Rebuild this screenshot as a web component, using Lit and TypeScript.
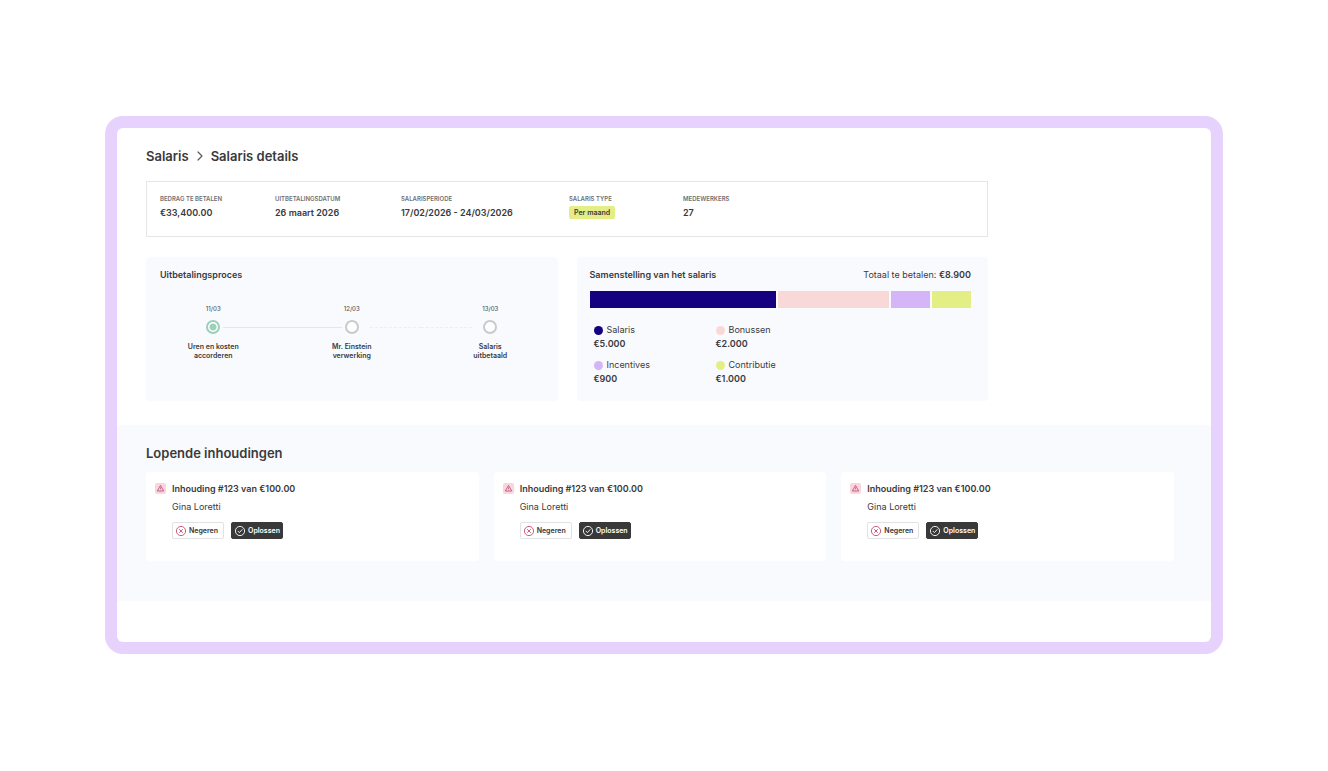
import { LitElement, html, css, svg } from "lit";
import { customElement, property } from "lit/decorators.js";
import { classMap } from "lit/directives/class-map.js";

interface Part {
  key: string;
  label: string;
  amount: string;
  weight: number;
}

const parts: Part[] = [
  { key: "navy", label: "Salaris", amount: "€5.000", weight: 186 },
  { key: "pink", label: "Bonussen", amount: "€2.000", weight: 110 },
  { key: "lilac", label: "Incentives", amount: "€900", weight: 39 },
  { key: "lime", label: "Contributie", amount: "€1.000", weight: 39 },
];

const steps = [
  { date: "11/03", first: "Uren en kosten", second: "accorderen", before: "none", after: "solid", active: true },
  { date: "12/03", first: "Mr. Einstein", second: "verwerking", before: "solid", after: "dashed", active: false },
  { date: "13/03", first: "Salaris", second: "uitbetaald", before: "dashed", after: "none", active: false },
];

const circle = svg`<circle cx="6" cy="6" r="4.6" fill="none" stroke="currentColor" stroke-width="0.9" />`;

@customElement("deduction-card")
class DeductionCard extends LitElement {
  @property() heading = "";
  @property() person = "";

  static styles = css`
    :host {
      display: block;
      background: #fff;
      box-sizing: border-box;
      padding: 10px 9px 22px;
      border-radius: 4px;
    }
    .card {
      display: grid;
      grid-template-columns: 11px 1fr;
      column-gap: 6px;
    }
    .alert {
      width: 11px;
      height: 11px;
      margin-top: 1px;
      border-radius: 2px;
      background: #f9d5de;
      color: #bf4470;
      display: block;
    }
    h3 {
      margin: 0;
      font-size: 9px;
      line-height: 13px;
      font-weight: 600;
    }
    p {
      margin: 5px 0 9px;
      font-size: 9px;
      line-height: 13px;
    }
    .actions {
      display: flex;
      gap: 7px;
    }
    button {
      display: flex;
      align-items: center;
      gap: 2px;
      box-sizing: border-box;
      height: 17px;
      padding: 0 5px 0 2px;
      border: 1px solid #e2e2e4;
      border-radius: 2px;
      background: #fff;
      color: #333335;
      font: 600 7px/9px Inter, sans-serif;
      cursor: pointer;
    }
    .solve {
      background: #39393a;
      border-color: #39393a;
      color: #fff;
      padding-right: 2px;
    }
    button svg {
      width: 12px;
      height: 12px;
    }
    .cross {
      color: #c84a72;
    }
  `;

  render() {
    return html`
      <article class="card">
        <svg class="alert" viewBox="0 0 11 11" aria-hidden="true">
          <path d="M5.5 2.4 8.7 8H2.3Z" fill="none" stroke="currentColor" stroke-width="0.8" stroke-linejoin="round" />
          <path d="M5.5 4.3V6.1M5.5 6.8V7.3" stroke="currentColor" stroke-width="0.7" />
        </svg>
        <div>
          <h3>${this.heading}</h3>
          <p>${this.person}</p>
          <div class="actions">
            <button type="button">
              <svg class="cross" viewBox="0 0 12 12" aria-hidden="true">
                ${circle}
                <path d="M4.5 4.5 7.5 7.5M7.5 4.5 4.5 7.5" stroke="currentColor" stroke-width="0.9" stroke-linecap="round" />
              </svg>
              Negeren
            </button>
            <button type="button" class="solve">
              <svg viewBox="0 0 12 12" aria-hidden="true">
                ${circle}
                <path d="M4 6.2 5.4 7.6 8.1 4.6" fill="none" stroke="currentColor" stroke-width="0.9" stroke-linecap="round" stroke-linejoin="round" />
              </svg>
              Oplossen
            </button>
          </div>
        </div>
      </article>
    `;
  }
}

@customElement("app-root")
class AppRoot extends LitElement {
  static styles = css`
    :host {
      display: block;
      box-sizing: border-box;
      min-height: 100vh;
      padding: 116px 105px;
      background: #fff;
      color: #3a3a3c;
      font-family: Inter, sans-serif;
    }
    .frame {
      border: 12px solid #e6d2fc;
      border-radius: 18px;
      background: #e6d2fc;
    }
    .screen {
      background: #fff;
      border-radius: 6px;
      overflow: hidden;
      padding: 19px 0 41px;
    }
    .top {
      max-width: 842px;
      margin-left: 29px;
      margin-right: 29px;
    }
    h1,
    .section-title {
      margin: 0;
      font-size: 13px;
      line-height: 18px;
      font-weight: 600;
    }
    h1 {
      display: flex;
      align-items: center;
      gap: 8px;
    }
    h1 a {
      color: inherit;
      text-decoration: none;
    }
    h1 svg {
      width: 6px;
      height: 10px;
    }
    .summary {
      display: grid;
      grid-template-columns: 115fr 126fr 168fr 114fr 291fr;
      margin: 16px 0 20px;
      padding: 13px 13px 17px;
      border: 1px solid #e6e6e8;
    }
    dl,
    dd {
      margin: 0;
    }
    .summary dt {
      font-size: 6px;
      line-height: 8px;
      font-weight: 600;
      color: #6f6f72;
      text-transform: uppercase;
    }
    .summary dd {
      font-size: 9px;
      line-height: 13px;
      font-weight: 600;
      margin-top: 3px;
    }
    .tag {
      display: inline-block;
      padding: 0 5px;
      border-radius: 2px;
      background: #e3ee85;
      font-size: 7px;
      line-height: 13px;
      vertical-align: top;
    }
    .panels {
      display: grid;
      grid-template-columns: 1fr 1fr;
      gap: 19px;
    }
    .panel {
      background: #f9fafe;
      padding: 10px 14px 15px;
      border-radius: 4px;
    }
    h2 {
      margin: 0;
      font-size: 9px;
      line-height: 15px;
      font-weight: 600;
    }
    .steps {
      list-style: none;
      display: grid;
      grid-template-columns: repeat(3, 1fr);
      margin: 22px -16px 0;
      padding: 0;
      text-align: center;
    }
    .date {
      display: block;
      font-size: 6px;
      line-height: 10px;
      font-weight: 500;
      color: #58585b;
    }
    .track {
      display: grid;
      grid-template-columns: 1fr 14px 1fr;
      align-items: center;
      column-gap: 3px;
      margin: 6px 0 8px;
    }
    .line {
      border-top: 1px solid transparent;
    }
    .line.solid {
      border-color: #e4e6e8;
    }
    .line.dashed {
      border-top: 1px dashed #eceef1;
    }
    .line.dashed.after {
      margin-left: 8px;
    }
    .line.dashed.before {
      margin-right: 8px;
    }
    .node {
      box-sizing: border-box;
      height: 14px;
      border: 2px solid #c9cacb;
      border-radius: 50%;
      background: #fff;
    }
    .node.active {
      border-color: #9bd0b9;
      background: radial-gradient(circle, #9bd0b9 3px, #fff 4px);
    }
    .caption {
      font-size: 7px;
      line-height: 9px;
      font-weight: 600;
      display: block;
    }
    .panel-head {
      display: flex;
      justify-content: space-between;
      font-size: 9px;
      line-height: 15px;
      margin-right: 3px;
    }
    .composition {
      padding-left: 13px;
    }
    b {
      font-weight: 600;
    }
    .bar {
      display: flex;
      gap: 2px;
      height: 17px;
      margin: 9px 3px 0 0;
    }
    .navy {
      background: #150080;
    }
    .pink {
      background: #f9d9d7;
    }
    .lilac {
      background: #d3b5f8;
    }
    .lime {
      background: #e3ee85;
    }
    .legend {
      display: grid;
      grid-template-columns: 122px 122px;
      row-gap: 7px;
      margin: 15px 0 0 4px;
      font-size: 9px;
      line-height: 14px;
    }
    .legend dt {
      display: flex;
      align-items: center;
      gap: 4px;
    }
    .legend dd {
      font-weight: 600;
    }
    .dot {
      width: 9px;
      height: 9px;
      border-radius: 50%;
    }
    .open {
      margin-top: 24px;
      padding: 19px 29px 40px;
      background: #f8fafe;
    }
    .cards {
      display: grid;
      grid-template-columns: repeat(3, 1fr);
      gap: 15px;
      margin: 10px 8px 0 0;
    }
  `;

  render() {
    return html`
      <main class="frame">
        <div class="screen">
          <div class="top">
            <h1>
              <a href="#salaris">Salaris</a>
              <svg viewBox="0 0 6 10" aria-hidden="true">
                <path d="M1 1 5 5 1 9" fill="none" stroke="#5a5a5c" stroke-width="1.2" stroke-linecap="round" stroke-linejoin="round" />
              </svg>
              <span>Salaris details</span>
            </h1>
            <dl class="summary">
              <div><dt>Bedrag te betalen</dt><dd>€33,400.00</dd></div>
              <div><dt>Uitbetalingsdatum</dt><dd>26 maart 2026</dd></div>
              <div><dt>Salarisperiode</dt><dd>17/02/2026 - 24/03/2026</dd></div>
              <div><dt>Salaris type</dt><dd><span class="tag">Per maand</span></dd></div>
              <div><dt>Medewerkers</dt><dd>27</dd></div>
            </dl>
            <div class="panels">
              <section class="panel">
                <h2>Uitbetalingsproces</h2>
                <ol class="steps">
                  ${steps.map(
                    (s) => html`<li>
                      <span class="date">${s.date}</span>
                      <div class="track">
                        <span class="line before ${s.before}"></span>
                        <span class=${classMap({ node: true, active: s.active })}></span>
                        <span class="line after ${s.after}"></span>
                      </div>
                      <span class="caption">${s.first}<br />${s.second}</span>
                    </li>`
                  )}
                </ol>
              </section>
              <section class="panel composition">
                <div class="panel-head">
                  <h2>Samenstelling van het salaris</h2>
                  <span>Totaal te betalen: <b>€8.900</b></span>
                </div>
                <div class="bar">
                  ${parts.map((p) => html`<div class=${p.key} style="flex: ${p.weight} 0 0"></div>`)}
                </div>
                <dl class="legend">
                  ${parts.map(
                    (p) => html`<div>
                      <dt><span class="dot ${p.key}"></span>${p.label}</dt>
                      <dd>${p.amount}</dd>
                    </div>`
                  )}
                </dl>
              </section>
            </div>
          </div>
          <section class="open">
            <h2 class="section-title">Lopende inhoudingen</h2>
            <div class="cards">
              ${[1, 2, 3].map(
                () => html`<deduction-card heading="Inhouding #123 van €100.00" person="Gina Loretti"></deduction-card>`
              )}
            </div>
          </section>
        </div>
      </main>
    `;
  }
}
